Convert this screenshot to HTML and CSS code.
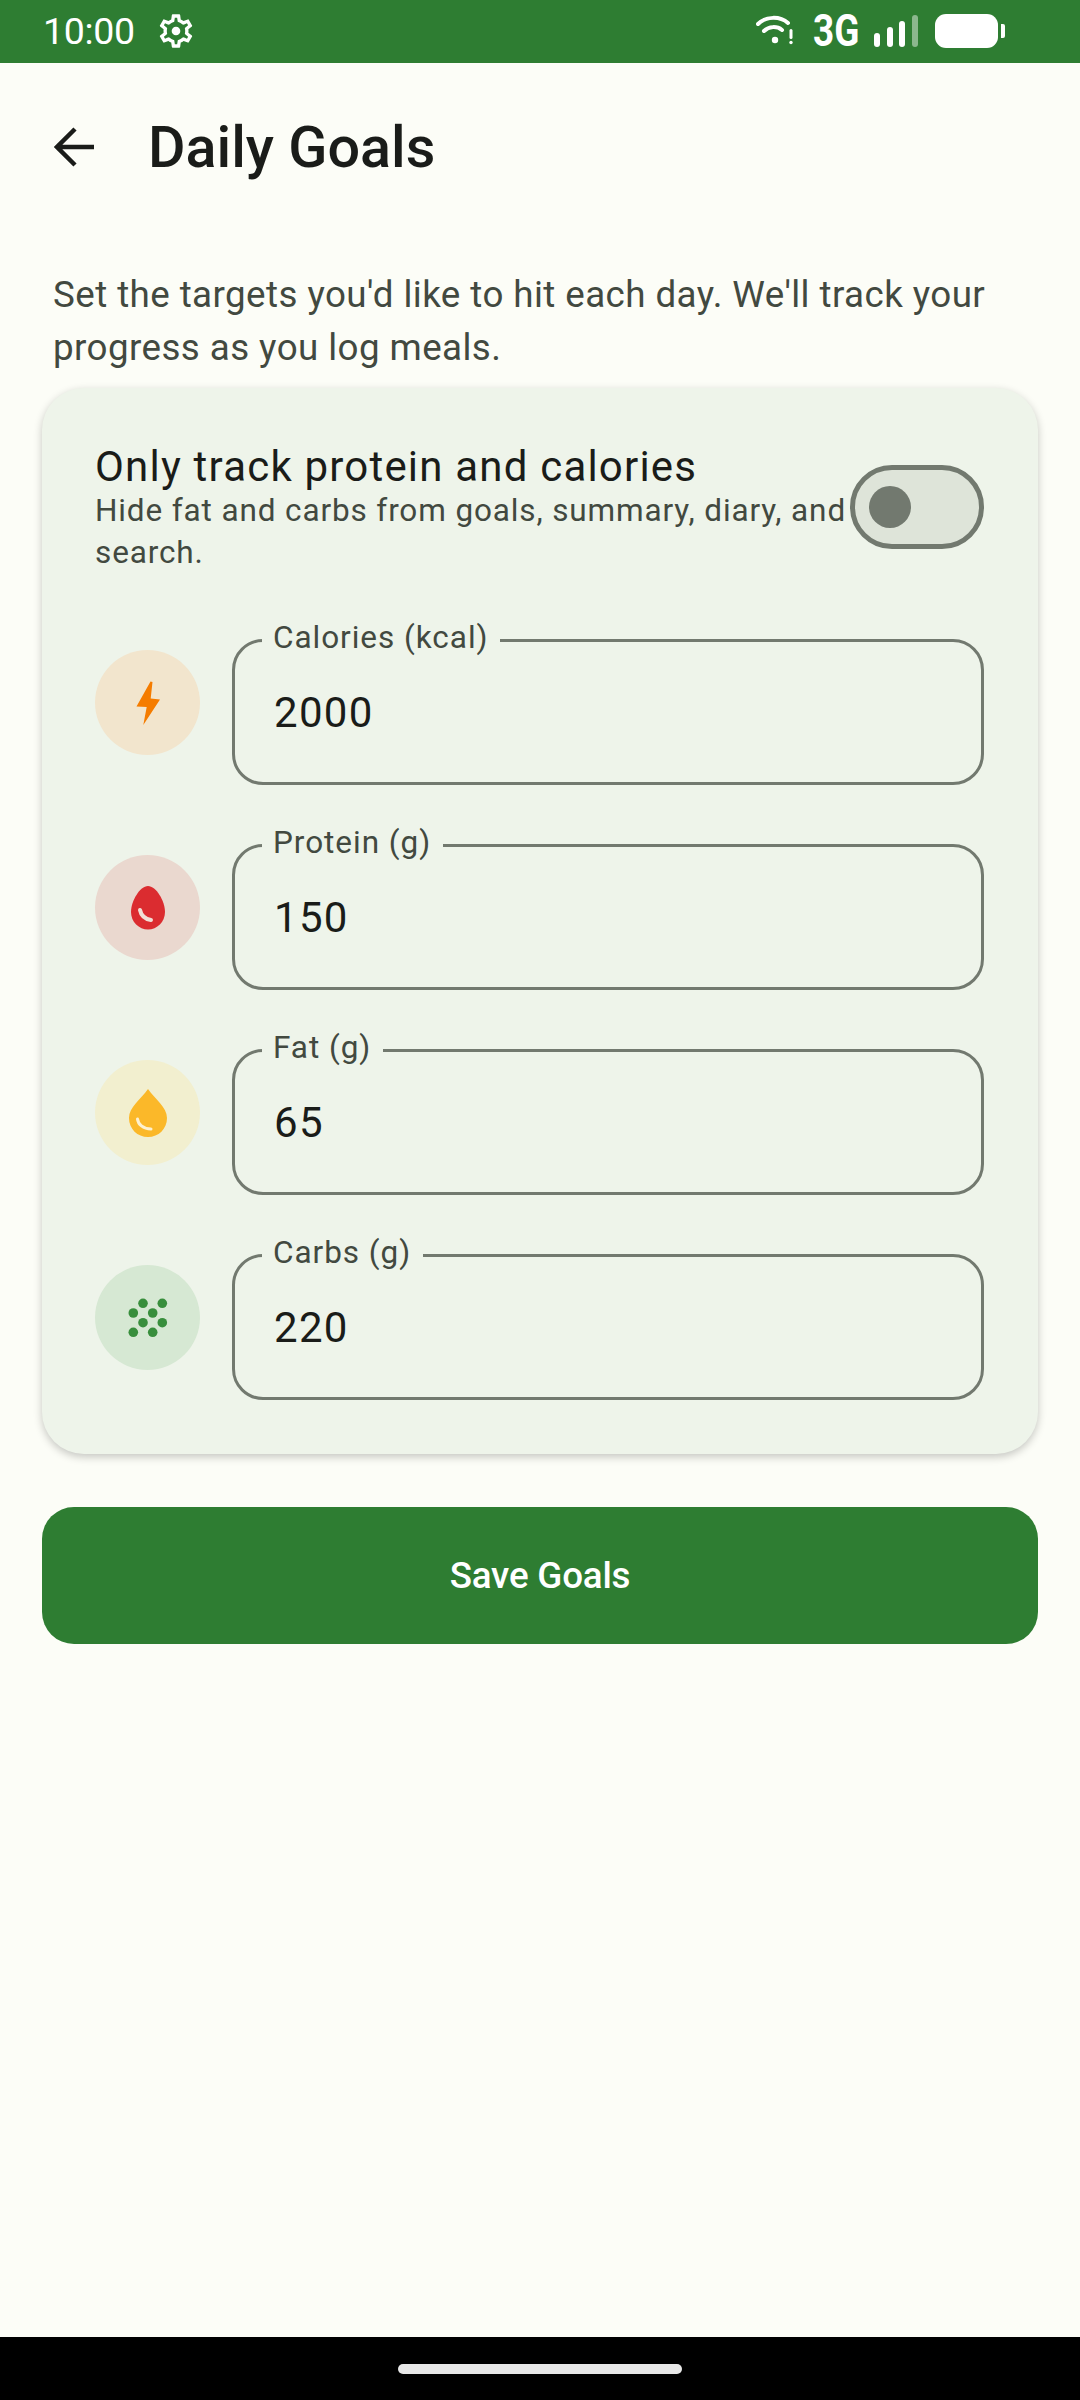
FILE: index.html
```html
<!DOCTYPE html>
<html lang="en">
  <head>
    <meta charset="UTF-8" />
    <meta name="viewport" content="width=device-width, initial-scale=1.0" />
    <title>Daily Goals</title>
    <link rel="stylesheet" href="styles.css">
  </head>
  <body>
    <div class="phone">
      <div class="status-bar">
        <span class="clock">10:00</span>
        <svg class="gear" viewBox="0 0 24 24">
          <path fill-rule="evenodd" d="M19.43 12.98c.04-.32.07-.64.07-.98 0-.34-.03-.66-.07-.98l2.11-1.65c.19-.15.24-.42.12-.64l-2-3.46c-.09-.16-.26-.25-.44-.25-.06 0-.12.01-.17.03l-2.49 1c-.52-.4-1.08-.73-1.69-.98l-.38-2.65C14.46 2.18 14.25 2 14 2h-4c-.25 0-.46.18-.49.42l-.38 2.65c-.61.25-1.17.59-1.69.98l-2.49-1c-.06-.02-.12-.03-.18-.03-.17 0-.34.09-.43.25l-2 3.46c-.13.22-.07.49.12.64l2.11 1.65c-.04.32-.07.65-.07.98 0 .33.03.66.07.98l-2.11 1.65c-.19.15-.24.42-.12.64l2 3.46c.09.16.26.25.44.25.06 0 .12-.01.17-.03l2.49-1c.52.4 1.08.73 1.69.98l.38 2.65c.03.24.24.42.49.42h4c.25 0 .46-.18.49-.42l.38-2.65c.61-.25 1.17-.59 1.69-.98l2.49 1c.06.02.12.03.18.03.17 0 .34-.09.43-.25l2-3.46c.12-.22.07-.49-.12-.64l-2.11-1.65zm-1.98-1.71c.04.31.05.52.05.73 0 .21-.02.43-.05.73l-.14 1.13.89.7 1.08.84-.7 1.21-1.27-.51-1.04-.42-.9.68c-.43.32-.84.56-1.25.73l-1.06.43-.16 1.13-.2 1.35h-1.4l-.19-1.35-.16-1.13-1.06-.43c-.43-.18-.83-.41-1.23-.71l-.91-.7-1.06.43-1.27.51-.7-1.21 1.08-.84.89-.7-.14-1.13c-.03-.31-.05-.54-.05-.74s.02-.43.05-.73l.14-1.13-.89-.7-1.08-.84.7-1.21 1.27.51 1.04.42.9-.68c.43-.32.84-.56 1.25-.73l1.06-.43.16-1.13.2-1.35h1.39l.19 1.35.16 1.13 1.06.43c.43.18.83.41 1.23.71l.91.7 1.06-.43 1.27-.51.7 1.21-1.07.85-.89.7.14 1.13z"/>
          <circle cx="12" cy="12" r="2.6"/>
        </svg>
        <div class="status-right">
          <svg class="wifi" viewBox="0 0 38 30">
            <path class="arc" d="M2 9 C10 1 24 1 32 8"/>
            <path class="arc" d="M8 16 C13 11 21 11 26 15"/>
            <circle cx="19" cy="25" r="3.2"/>
            <rect x="33.5" y="14" width="3" height="10" rx="1.5"/>
            <circle cx="35" cy="27.5" r="1.7"/>
          </svg>
          <span class="network">3G</span>
          <svg class="signal" viewBox="0 0 44 32">
            <rect x="0" y="18" width="6" height="14" rx="3"/>
            <rect x="13" y="12" width="6" height="20" rx="3"/>
            <rect x="25" y="6" width="6" height="26" rx="3"/>
            <rect x="38" y="0" width="6" height="32" rx="3" opacity="0.45"/>
          </svg>
          <div class="battery"></div>
          <div class="battery-tip"></div>
        </div>
      </div>

      <div class="page">
        <div class="toolbar">
          <svg class="back" viewBox="0 0 42 42">
            <path d="M40 21 H4 M21 3 L3 21 L21 39"/>
          </svg>
          <h1>Daily Goals</h1>
        </div>

        <p class="intro">Set the targets you'd like to hit each day. We'll track your progress as you log meals.</p>

        <div class="card">
          <div class="toggle-row">
            <div class="toggle-text">
              <div class="toggle-title">Only track protein and calories</div>
              <div class="toggle-sub">Hide fat and carbs from goals, summary, diary, and search.</div>
            </div>
            <div class="switch"><div class="thumb"></div></div>
          </div>

          <div class="goal-row">
            <div class="goal-icon calories">
              <svg viewBox="0 0 105 105"><path d="M55.5 31.5 L41.5 56.5 L51.7 57 L48.3 75 L65 49.5 L55.7 48.5 L57.5 32 Z" fill="#f57c00"/></svg>
            </div>
            <fieldset class="field">
              <legend>Calories (kcal)</legend>
              <div class="value">2000</div>
            </fieldset>
          </div>

          <div class="goal-row">
            <div class="goal-icon protein">
              <svg viewBox="0 0 105 105">
                <path d="M53 31 C61 31 70 46 70 57 C70 67 62 74.500 53 74.500 C44 74.500 36 67 36 57 C36 46 45 31 53 31 Z" fill="#db2c30"/>
                <path class="shine" d="M45 55 C46 60 50 64 56 65"/>
              </svg>
            </div>
            <fieldset class="field">
              <legend>Protein (g)</legend>
              <div class="value">150</div>
            </fieldset>
          </div>

          <div class="goal-row">
            <div class="goal-icon fat">
              <svg viewBox="0 0 105 105">
                <path d="M53 29 C60 39 72 47 72 58 C72 69 63.500 77 53 77 C42.500 77 34 69 34 58 C34 47 46 39 53 29 Z" fill="#fbb829"/>
                <path class="shine thin" d="M42.500 59 C43 64 48 69 56 69"/>
              </svg>
            </div>
            <fieldset class="field">
              <legend>Fat (g)</legend>
              <div class="value">65</div>
            </fieldset>
          </div>

          <div class="goal-row">
            <div class="goal-icon carbs">
              <svg viewBox="0 0 105 105" fill="#388e3c">
                <circle cx="48" cy="38.300" r="4.800"/>
                <circle cx="67.300" cy="38.300" r="4.800"/>
                <circle cx="38.300" cy="48" r="4.800"/>
                <circle cx="57.700" cy="48" r="4.800"/>
                <circle cx="48" cy="57.700" r="4.800"/>
                <circle cx="67.300" cy="57.700" r="4.800"/>
                <circle cx="38.300" cy="67.300" r="4.800"/>
                <circle cx="57.700" cy="67.300" r="4.800"/>
              </svg>
            </div>
            <fieldset class="field">
              <legend>Carbs (g)</legend>
              <div class="value">220</div>
            </fieldset>
          </div>
        </div>

        <button class="save">Save Goals</button>
      </div>

      <div class="nav-bar"><div class="handle"></div></div>
    </div>
  </body>
</html>
```

FILE: styles.css
```css
* {
  box-sizing: border-box;
}
body {
  margin: 0;
  font-family: "Roboto", sans-serif;
  background-color: #fcfdf7;
}
.phone {
  height: 2400px;
  display: flex;
  flex-direction: column;
}

/* status bar */
.status-bar {
  height: 63px;
  background-color: #2e7d32;
  color: #fff;
  display: flex;
  align-items: center;
  padding: 0 75px 2px 43px;
}
.clock {
  font-size: 37.500px;
  width: 111px;
  font-weight: 400;
  letter-spacing: -0.300px;
}
.gear {
  width: 40px;
  height: 40px;
  fill: #fff;
  margin-left: 2px;
}
.status-right {
  margin-left: auto;
  display: flex;
  align-items: center;
}
.wifi {
  width: 38px;
  height: 30px;
  fill: #fff;
  margin-top: -2px;
}
.wifi .arc {
  fill: none;
  stroke: #fff;
  stroke-width: 4;
  stroke-linecap: round;
}
.network {
  font-size: 45px;
  font-weight: 700;
  line-height: 40px;
  margin-left: 19px;
  transform: scaleX(0.82);
  transform-origin: left center;
  width: 45px;
}
.signal {
  width: 44px;
  height: 32px;
  fill: #fff;
  margin-left: 16px;
}
.battery {
  width: 63px;
  height: 34px;
  margin-left: 17px;
  border-radius: 11px;
  background-color: #fff;
}
.battery-tip {
  width: 4px;
  height: 14px;
  margin-left: 3px;
  border-radius: 0 2px 2px 0;
  background-color: #fff;
}

/* page */
.page {
  flex: 1;
  padding: 0 42px;
}
.toolbar {
  display: flex;
  align-items: center;
  height: 168px;
  padding: 0 0 0 12px;
}
.back {
  width: 42px;
  height: 42px;
  fill: none;
  stroke: #1a1c19;
  stroke-width: 4.500;
}
h1 {
  margin: 0 0 0 52px;
  font-size: 57.500px;
  font-weight: 500;
  color: #1a1c19;
}
.intro {
  margin: 37px 12px 14px 11px;
  font-size: 36.750px;
  line-height: 53px;
  letter-spacing: 0.420px;
  color: #424940;
}

/* card */
.card {
  height: 1066px;
  padding: 54px 54px 0 53px;
  border-radius: 42px;
  background-color: #eef4ea;
  box-shadow: 0 3px 8px rgba(0, 0, 0, 0.22);
}
.toggle-row {
  display: flex;
  align-items: flex-start;
  height: 123px;
  margin-bottom: 53px;
}
.toggle-text {
  width: 755px;
  flex-shrink: 0;
}
.toggle-title {
  font-size: 42px;
  line-height: 50px;
  letter-spacing: 1.200px;
  color: #1a1c19;
}
.toggle-sub {
  margin-top: -2px;
  font-size: 31.500px;
  line-height: 42px;
  letter-spacing: 0.870px;
  color: #424940;
}
.switch {
  width: 134px;
  height: 84px;
  flex-shrink: 0;
  margin-top: 23px;
  padding: 0 0 0 14px;
  display: flex;
  align-items: center;
  border: 5px solid #72796f;
  border-radius: 42px;
  background-color: #dee4d9;
}
.thumb {
  width: 42px;
  height: 42px;
  border-radius: 50%;
  background-color: #72796f;
}

/* goal rows */
.goal-row {
  display: flex;
  align-items: center;
  height: 167px;
  margin-bottom: 38px;
}
.goal-icon {
  width: 105px;
  height: 105px;
  margin-top: 2px;
  flex-shrink: 0;
  border-radius: 50%;
}
.goal-icon svg {
  display: block;
  width: 105px;
  height: 105px;
}
.calories {
  background-color: #f2e5cd;
}
.protein {
  background-color: #ead8cf;
}
.fat {
  background-color: #f2efcf;
}
.carbs {
  background-color: #d6e8d3;
}
.shine {
  fill: none;
  stroke: #f1dfd6;
  stroke-width: 4;
  stroke-linecap: round;
}
.shine.thin {
  stroke: #fdf1d0;
  stroke-width: 3;
}
.field {
  flex: 1;
  height: 167px;
  margin: 0 0 0 32px;
  padding: 0 0 0 39px;
  border: 3px solid #72796f;
  border-radius: 31px;
  display: flex;
  align-items: center;
}
.field legend {
  margin-left: -12px;
  padding: 0 12px 4px 11px;
  font-size: 31.500px;
  line-height: 40px;
  letter-spacing: 0.960px;
  color: #424940;
}
.value {
  margin-top: -20px;
  font-size: 42px;
  letter-spacing: 1.300px;
  color: #1a1c19;
}

/* button */
.save {
  display: block;
  width: 100%;
  height: 137px;
  margin-top: 53px;
  border: 0;
  border-radius: 32px;
  background-color: #2e7d32;
  color: #fff;
  font-family: "Roboto", sans-serif;
  font-size: 36.750px;
  font-weight: 500;
  letter-spacing: -0.200px;
}

/* gesture bar */
.nav-bar {
  height: 63px;
  padding-top: 27px;
  background-color: #000;
}
.handle {
  width: 284px;
  height: 10px;
  margin: 0 auto;
  border-radius: 5px;
  background-color: #e8e8e8;
}
```
